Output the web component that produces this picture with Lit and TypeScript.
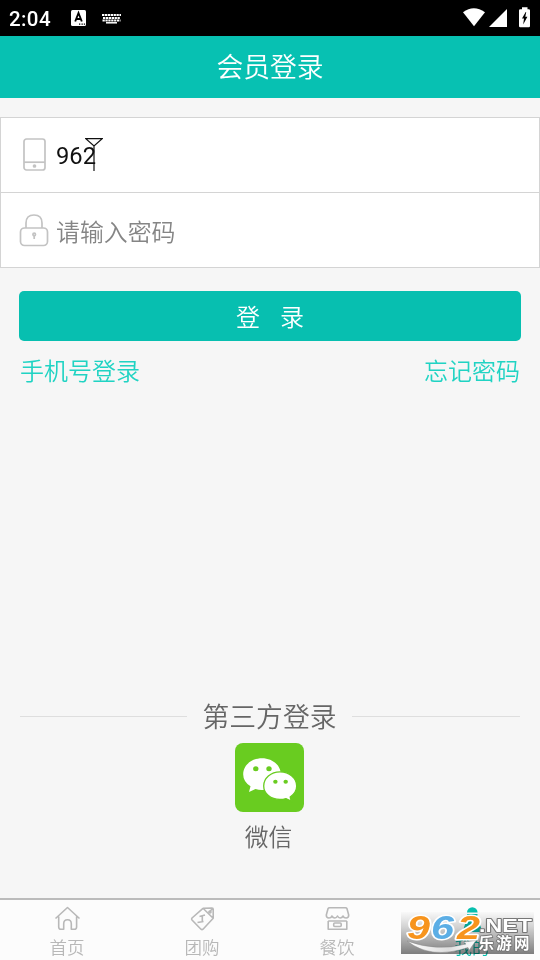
import { LitElement, html, css, svg } from "lit";
import { customElement, property } from "lit/decorators.js";

const homeIcon = svg`<path d="M.5 12.500 12.500 1.500l12 11M3.700 10.500V21q0 2.300 2.300 2.300H8.700v-5.500q0-4 3.800-4t3.800 4v5.500h3q2.300 0 2.300-2.300V10.500"/>`;
const groupIcon = svg`<path d="M13 2.300 22 2q1.200 0 1.200 1.200v9L13 23.200q-1 .8-2 0L2 14q-.8-1 0-2L13 2.300l10.200 10M22.700 2.500l-4 4"/><circle cx="20" cy="6" r="1"/><path d="M9.500 10.500 15 9M12.300 10v5.500M7.500 16.500l6-1"/>`;
const foodIcon = svg`<path d="M4.500 1.700h16q1 0 1.500 1L23.700 9q0 3-2.600 3-2.200 0-3-2-1.200 2-2.900 2-1.700 0-2.700-2-1 2-2.700 2T6.900 10q-.8 2-3 2Q1.300 12 1.300 9L3 2.700q.5-1 1.500-1ZM3.200 15v8.300h18.600V15M3.200 15h18.600"/><rect x="8.700" y="17" width="7.500" height="3.500" rx="1"/>`;
const userIcon = svg`<g fill="#07bfae" stroke="none"><path d="M7 6.500a5.300 5.300 0 0 1 10.600 0z"/><path d="M7 8h10.600q-.5 4-2.500 5 6 3.500 6.500 13H3.200Q4 16.500 9.500 13 7.500 12 7 8z"/></g>`;

@customElement("status-bar")
export class StatusBar extends LitElement {
  static styles = css`
    :host { display: flex; height: 36px; background: #000; color: #fff; align-items: center; font: 500 20.500px Roboto, sans-serif; }
    .time { width: 70px; padding: 1px 0 0 9px; box-sizing: border-box; letter-spacing: .4px; }
    .left { flex: 1; }
    svg { display: block; }
  `;
  render() {
    return html`
      <span class="time">2:04</span>
      <svg class="left" height="36" viewBox="70 0 380 36" preserveAspectRatio="xMinYMid meet">
        <rect x="71" y="10" width="15" height="16" rx="1.500" fill="#fff"/>
        <path d="m75.200 21.500 3.300-8.500 3.300 8.500M76.500 19h4" fill="none" stroke="#000" stroke-width="1.900"/>
        <path d="M79 24.200h1.300m1.200 0h1.300m1 0h1.300" stroke="#000" stroke-width="1.200"/>
        <path d="M102 15h19M103 18h17M102.500 20.500h18" stroke="#fff" stroke-width="1.800" stroke-dasharray="2.300 .6"/>
        <path d="M106 22.800h11" stroke="#fff" stroke-width="1.500"/>
      </svg>
      <svg width="90" height="36" viewBox="450 0 90 36" fill="#fff">
        <path d="M463 12.300Q473.800 4.300 485 12.300L474 26.300Z"/>
        <path d="M489 27h18V9Z"/>
        <path d="M522 7.200h5.500v2h1.300q1.200 0 1.200 1.200V26q0 1.200-1.200 1.200h-8.500q-1.300 0-1.300-1.200V10.400q0-1.200 1.300-1.200h1.700z"/>
        <path d="m525.700 12-3.700 6.500h2l-.8 6 4.200-7.700h-2.100l.9-4.800z" fill="#000"/>
      </svg>`;
  }
}

@customElement("login-form")
export class LoginForm extends LitElement {
  static styles = css`
    :host { display: block; padding-top: 19px; }
    .fields { background: #fff; border: 1px solid #d4d4d4; }
    .row { display: flex; align-items: center; height: 74px; padding-left: 18px; font-size: 23.900px; }
    .row + .row { border-top: 1px solid #d4d4d4; }
    .row svg { width: 30px; height: 36px; margin-right: 7px; margin-top: -1px; fill: none; stroke: #c3c3c3; stroke-width: 1.700; }
    .row + .row svg { margin-top: 1px; }
    .value { color: #111; font-family: Roboto, sans-serif; font-size: 23.700px; font-weight: 400; padding-top: 2px; }
    .row .caret { width: 18px; height: 34px; margin: -2px 0 0 -10.500px; stroke: #111; stroke-width: 1.200; }
    .hint { color: #858585; }
    .button { margin: 23px 19px 0; height: 50px; border-radius: 5px; background: #07bfb0; color: #fff; display: flex; align-items: center; justify-content: center; gap: 20px; font-size: 24px; }
    .button span { margin-top: -2px; }
    .links { display: flex; justify-content: space-between; padding: 11px 20px 0; color: #20d3c3; font-size: 24px; line-height: 36px; }
  `;
  render() {
    return html`
      <div class="fields">
        <div class="row">
          <svg viewBox="0 0 30 36"><rect x="5" y="2" width="21" height="31" rx="2.500"/><path d="M5 25.200h21"/><circle cx="15.500" cy="29" r="1" fill="#aaa"/></svg>
          <span class="value">962</span>
          <svg class="caret" viewBox="0 0 18 34"><path d="M.8 1.600h16.400L9 9zM9 9v25"/></svg>
        </div>
        <div class="row">
          <svg viewBox="0 0 30 36"><rect x="1.500" y="15" width="27" height="17.500" rx="4"/><path d="M7 15v-5q0-8 8-8t8 8v5M15.200 22v4"/><circle cx="15.200" cy="21.500" r="1.300"/></svg>
          <span class="hint">请输入密码</span>
        </div>
      </div>
      <div class="button"><span>登</span><span>录</span></div>
      <div class="links"><span>手机号登录</span><span>忘记密码</span></div>`;
  }
}

@customElement("third-party")
export class ThirdParty extends LitElement {
  static styles = css`
    :host { display: flex; flex-direction: column; align-items: center; color: #666; }
    .title { display: flex; align-items: center; align-self: stretch; margin: 0 20px; gap: 15.500px; font-size: 26.800px; line-height: 40px; }
    .title::before, .title::after { content: ""; flex: 1; height: 1px; background: #dedede; }
    .title::after { flex-basis: 1px; }
    svg { display: block; margin: 7px 2px 6px 0; }
    .name { font-size: 23.800px; line-height: 36px; padding-right: 3px; }
  `;
  render() {
    return html`
      <div class="title">第三方登录</div>
      <svg width="69" height="69" viewBox="0 0 69 69">
        <rect width="69" height="69" rx="8" fill="#69cc20"/>
        <path d="M27 15.200c10.500 0 18.800 7 18.800 16.200S37.500 47 27 47q-3.500 0-6.500-1L14 49l1.500-5.800Q8.200 38.500 8.200 31.400C8.200 22.200 16.500 15.200 27 15.200Z" fill="#fff"/>
        <ellipse cx="20.800" cy="25.700" rx="2.700" ry="2.500" fill="#69cc20"/><ellipse cx="34" cy="25.700" rx="2.700" ry="2.500" fill="#69cc20"/>
        <path d="M45 28.800c9.300 0 16.700 6.300 16.700 14.200q0 6.500-6.500 11l1 4.200-5.200-2.600q-2.800.9-6 .9c-9.300 0-16.300-6-16.300-13.500S35.700 28.800 45 28.800Z" fill="#fff" stroke="#69cc20" stroke-width="1.300"/>
        <ellipse cx="40.400" cy="38.800" rx="2.200" ry="2" fill="#69cc20"/><ellipse cx="50.700" cy="38.800" rx="2.200" ry="2" fill="#69cc20"/>
      </svg>
      <div class="name">微信</div>`;
  }
}

@customElement("tab-bar")
export class TabBar extends LitElement {
  @property({ attribute: false }) tabs = [
    { label: "首页", icon: homeIcon, active: false },
    { label: "团购", icon: groupIcon, active: false },
    { label: "餐饮", icon: foodIcon, active: false },
    { label: "我的", icon: userIcon, active: true },
  ];
  static styles = css`
    :host { display: flex; box-sizing: border-box; height: 62px; border-top: 2px solid #bbb; background: #fcfcfc; }
    .tab { flex: 1; display: flex; flex-direction: column; align-items: center; padding: 6px 1px 0 0; color: #b8b8b8; font-size: 17.500px; line-height: 26px; box-sizing: border-box; }
    .tab svg { width: 26px; height: 26px; margin: 0 0 2px 1px; overflow: visible; fill: none; stroke: #b8b8b8; stroke-width: 1.600; stroke-linejoin: round; }
    .active { color: #07bfae; }
  `;
  render() {
    return this.tabs.map(
      (t) => html`<div class="tab ${t.active ? "active" : ""}"><svg viewBox="0 0 26 26">${t.icon}</svg><span>${t.label}</span></div>`
    );
  }
}

@customElement("site-badge")
export class SiteBadge extends LitElement {
  static styles = css`
    :host { display: block; width: 133px; height: 42px; }
    .plate { position: absolute; inset: 0; mix-blend-mode: multiply; background: linear-gradient(#fcfcfc, #d6d6d6 35%, #808080); }
    svg { position: relative; display: block; overflow: visible; font-weight: 700; }
    text { paint-order: stroke; stroke-linejoin: round; }
    .digit { font-family: "Liberation Sans", sans-serif; font-style: italic; font-size: 34px; stroke: #fff; stroke-width: 3px; }
    .net { font-family: "Liberation Sans", sans-serif; font-size: 18px; fill: #fff; stroke: #777; stroke-width: 1.800px; }
    .cn { font-family: "Noto Sans CJK SC", sans-serif; font-size: 15.500px; fill: #fff; stroke: #777; stroke-width: 1.800px; }
  `;
  render() {
    return html`
      <div class="plate"></div>
      <svg width="133" height="42" viewBox="0 0 133 42">
        <defs>
          <linearGradient id="s"><stop stop-color="#fff"/><stop offset=".6" stop-color="#ddd"/><stop offset="1" stop-color="#fff"/></linearGradient>
        </defs>
        <path d="M6 29Q36 40 65 32l-2.500-2 12.500-1.500L68 38.500l-1-3Q30 48 6 29Z" fill="url(#s)" stroke="#888" stroke-width=".5"/>
        <text class="digit" x="6" y="26.500" textLength="23" lengthAdjust="spacingAndGlyphs" fill="#f7941d">9</text>
        <text class="digit" x="30" y="26.500" textLength="23" lengthAdjust="spacingAndGlyphs" fill="#5caee5">6</text>
        <text class="digit" x="56" y="26.500" textLength="23" lengthAdjust="spacingAndGlyphs" fill="#f7941d">2</text>
        <text class="net" x="78" y="19.500" textLength="53" lengthAdjust="spacingAndGlyphs">.NET</text>
        <text class="cn" x="77.500" y="37" textLength="51">乐游网</text>
      </svg>`;
  }
}

@customElement("app-root")
export class AppRoot extends LitElement {
  static styles = css`
    :host { display: flex; flex-direction: column; position: relative; width: 540px; height: 960px; overflow: hidden; background: #f6f6f6; font-family: "Noto Sans CJK SC", sans-serif; font-weight: 350; }
    .header { height: 62px; background: #07c1b2; color: #fff; font-size: 26.800px; line-height: 60px; text-align: center; }
    .grow { flex: 1; }
    third-party { margin-bottom: 44px; }
    site-badge { position: absolute; right: 6px; bottom: 6px; }
  `;
  render() {
    return html`
      <status-bar></status-bar>
      <div class="header">会员登录</div>
      <login-form></login-form>
      <div class="grow"></div>
      <third-party></third-party>
      <tab-bar></tab-bar>
      <site-badge></site-badge>`;
  }
}
